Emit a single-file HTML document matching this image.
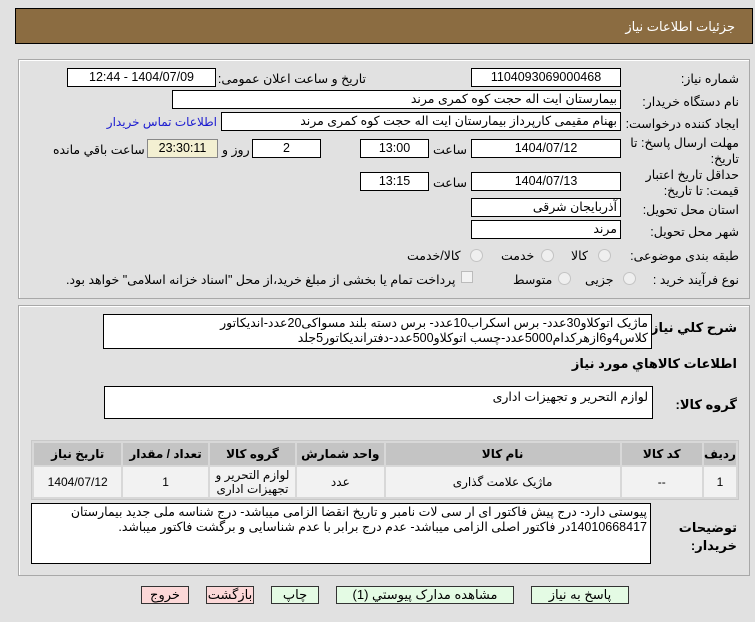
<!DOCTYPE html>
<html><head><meta charset="utf-8"><style>
*{box-sizing:border-box;margin:0;padding:0}
body{width:755px;height:622px;background:#e1e1e1;font-family:"Liberation Sans","DejaVu Sans",sans-serif;font-size:12.5px;color:#000;position:relative;overflow:hidden}
.a{position:absolute;white-space:nowrap}
.r{direction:rtl;text-align:right}
.box{position:absolute;background:#fff;border:1px solid #000;height:19px;line-height:17px;text-align:center;direction:rtl}
.panel{position:absolute;border:1px solid #a8a8a8;box-shadow:inset 1px 1px 0 #fff}
.rad{position:absolute;width:13px;height:13px;border-radius:50%;border:1px solid #c4c4c4;background:#efefef}
.btn{position:absolute;height:18px;border:1px solid #333;line-height:16px;text-align:center;font-size:13px;direction:rtl}
table{border-collapse:separate;border-spacing:2px;position:absolute;left:31px;top:440px;width:708px;background:#d8d8d8;border:1px solid #c8c8c8}
th{background:#c4c4c4;height:22px;font-weight:bold;font-size:12px}
td{background:#f2f2f2;height:30px;text-align:center;font-size:12px;line-height:14px}
</style></head><body>
<div class="a" style="left:15px;top:8px;width:738px;height:36px;background:#8b6c41;border:1px solid #000"></div>
<div class="a r" style="right:20px;top:19px;color:#fff;font-size:13px">جزئیات اطلاعات نیاز</div>

<div class="panel" style="left:18px;top:59px;width:732px;height:240px"></div>
<div class="a r" style="right:16px;top:71px">شماره نیاز:</div>
<div class="box" style="left:471px;top:68px;width:150px">1104093069000468</div>
<div class="a r" style="right:389px;top:71px">تاریخ و ساعت اعلان عمومی:</div>
<div class="box" style="left:67px;top:68px;width:149px">1404/07/09 - 12:44</div>

<div class="a r" style="right:16px;top:94px">نام دستگاه خریدار:</div>
<div class="box" style="left:172px;top:90px;width:449px;text-align:right;padding-right:3px">بیمارستان ایت اله حجت کوه کمری مرند</div>

<div class="a r" style="right:16px;top:116px">ایجاد کننده درخواست:</div>
<div class="box" style="left:221px;top:112px;width:400px;text-align:right;padding-right:3px">بهنام مقیمی کارپرداز بیمارستان ایت اله حجت کوه کمری مرند</div>
<div class="a r" style="right:538px;top:115px;color:#1a1ad0;font-size:12px">اطلاعات تماس خریدار</div>

<div class="a r" style="right:16px;top:135px;line-height:16px;text-align:right">مهلت ارسال پاسخ: تا<br>تاریخ:</div>
<div class="box" style="left:471px;top:139px;width:150px">1404/07/12</div>
<div class="a" style="left:433px;top:142px">ساعت</div>
<div class="box" style="left:360px;top:139px;width:69px">13:00</div>
<div class="box" style="left:252px;top:139px;width:69px">2</div>
<div class="a" style="left:222px;top:142px">روز و</div>
<div class="box" style="left:147px;top:139px;width:71px;background:#f3f0d2;border-color:#888">23:30:11</div>
<div class="a" style="left:53px;top:142px">ساعت باقي مانده</div>

<div class="a r" style="right:16px;top:167px;line-height:16px;text-align:right">حداقل تاریخ اعتبار<br>قیمت: تا تاریخ:</div>
<div class="box" style="left:471px;top:172px;width:150px">1404/07/13</div>
<div class="a" style="left:433px;top:175px">ساعت</div>
<div class="box" style="left:360px;top:172px;width:69px">13:15</div>

<div class="a r" style="right:16px;top:202px">استان محل تحویل:</div>
<div class="box" style="left:471px;top:198px;width:150px;text-align:right;padding-right:3px">آذربایجان شرقی</div>
<div class="a r" style="right:16px;top:224px">شهر محل تحویل:</div>
<div class="box" style="left:471px;top:220px;width:150px;text-align:right;padding-right:3px">مرند</div>

<div class="a r" style="right:16px;top:248px">طبقه بندی موضوعی:</div>
<div class="rad" style="left:598px;top:249px"></div><div class="a" style="left:571px;top:248px">کالا</div>
<div class="rad" style="left:541px;top:249px"></div><div class="a" style="left:501px;top:248px">خدمت</div>
<div class="rad" style="left:470px;top:249px"></div><div class="a" style="left:407px;top:248px">کالا/خدمت</div>

<div class="a r" style="right:16px;top:272px">نوع فرآیند خرید :</div>
<div class="rad" style="left:623px;top:272px"></div><div class="a" style="left:585px;top:272px">جزیی</div>
<div class="rad" style="left:558px;top:272px"></div><div class="a" style="left:513px;top:272px">متوسط</div>
<div class="a" style="left:461px;top:271px;width:12px;height:12px;border:1px solid #bbb;background:#f2f2f2"></div>
<div class="a r" style="left:66px;top:272px">پرداخت تمام یا بخشی از مبلغ خرید،از محل "اسناد خزانه اسلامی" خواهد بود.</div>

<div class="panel" style="left:18px;top:305px;width:732px;height:271px"></div>
<div class="a r" style="right:18px;top:320px;font-weight:bold;font-size:13px">شرح کلي نیاز:</div>
<div class="a r" style="left:103px;top:314px;width:549px;height:35px;background:#fff;border:1px solid #000;white-space:normal;line-height:15px;padding:1px 3px;font-size:12.5px">ماژیک اتوکلاو30عدد- برس اسکراب10عدد- برس دسته بلند مسواکی20عدد-اندیکاتور کلاس4و6ازهرکدام5000عدد-چسب اتوکلاو500عدد-دفتراندیکاتور5جلد</div>
<div class="a r" style="right:18px;top:356px;font-weight:bold;font-size:13px">اطلاعات کالاهاي مورد نياز</div>
<div class="a r" style="right:18px;top:397px;font-weight:bold;font-size:13px">گروه کالا:</div>
<div class="a r" style="left:104px;top:386px;width:549px;height:33px;background:#fff;border:1px solid #000;padding:2px 4px">لوازم التحریر و تجهیزات اداری</div>

<table>
<tr><th style="width:87px">تاریخ نیاز</th><th style="width:84px">تعداد / مقدار</th><th style="width:85px">گروه کالا</th><th style="width:86px">واحد شمارش</th><th style="width:233px">نام کالا</th><th style="width:80px">کد کالا</th><th style="width:28px">ردیف</th></tr>
<tr><td>1404/07/12</td><td>1</td><td>لوازم التحریر و<br>تجهیزات اداری</td><td>عدد</td><td>ماژیک علامت گذاری</td><td>--</td><td>1</td></tr>
</table>

<div class="a r" style="right:18px;top:519px;font-weight:bold;font-size:13px;line-height:18px">توضیحات<br>خریدار:</div>
<div class="a r" style="left:31px;top:503px;width:620px;height:61px;background:#fff;border:1px solid #000;white-space:normal;line-height:15px;padding:1px 3px">پیوستی دارد- درج پیش فاکتور ای ار سی لات نامبر و تاریخ انقضا الزامی میباشد- درج شناسه ملی  جدید بیمارستان 14010668417در فاکتور اصلی الزامی میباشد- عدم درج برابر با عدم شناسایی و برگشت فاکتور میباشد.</div>

<div class="btn" style="left:531px;top:586px;width:98px;background:#e4fbe4">پاسخ به نیاز</div>
<div class="btn" style="left:336px;top:586px;width:178px;background:#e4fbe4">مشاهده مدارک پیوستي (1)</div>
<div class="btn" style="left:271px;top:586px;width:48px;background:#e4fbe4">چاپ</div>
<div class="btn" style="left:206px;top:586px;width:48px;background:#fcd8d8">بازگشت</div>
<div class="btn" style="left:141px;top:586px;width:48px;background:#fcd8d8">خروج</div>
</body></html>
